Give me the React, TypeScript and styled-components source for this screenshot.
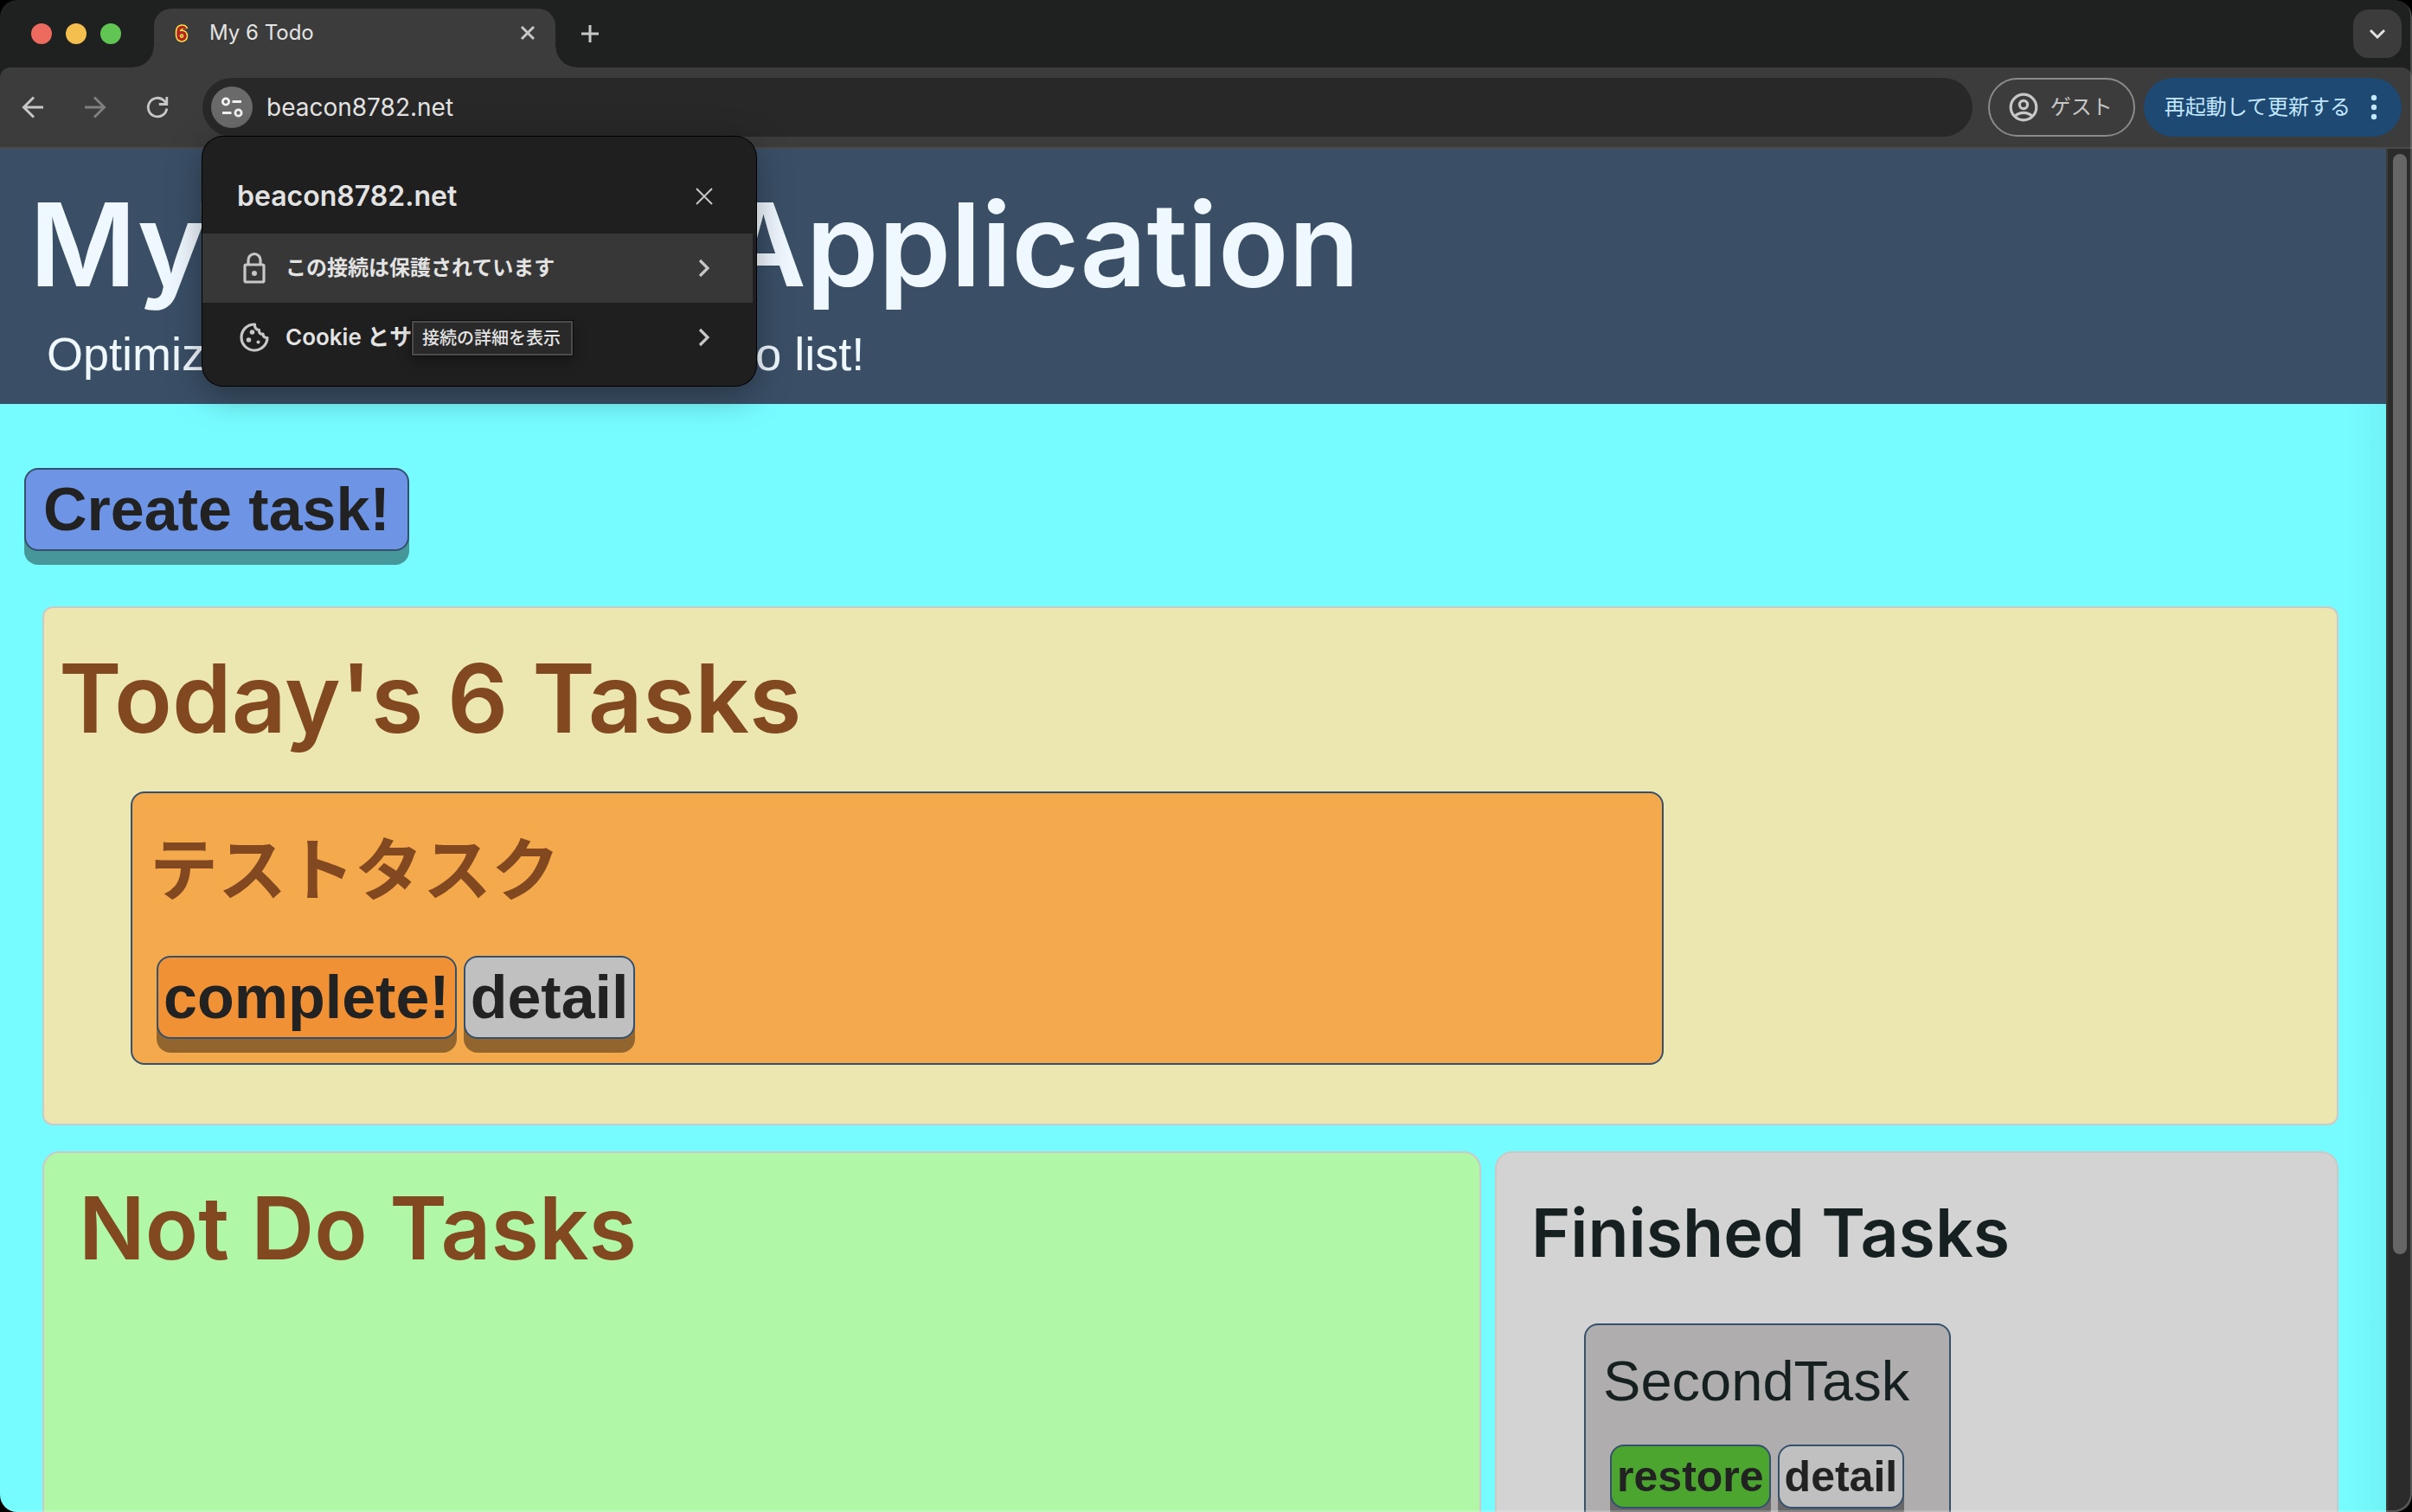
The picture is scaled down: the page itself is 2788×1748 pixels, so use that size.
import React from "react";
import styled, { createGlobalStyle, css } from "styled-components";

const GlobalStyle = createGlobalStyle`
  * { box-sizing: border-box; }
  html, body, #root { height: 100%; }
  body { margin: 0; background: #000; overflow: hidden; }
  h1, h2, h3, p { margin: 0; }
  button, input { font: inherit; color: inherit; margin: 0; }
`;

const uiFont = `Inter, "Noto Sans CJK JP", sans-serif`;
const pageFont = `"Liberation Sans", "Noto Sans CJK JP", sans-serif`;

/* ---------- browser window ---------- */

const Window = styled.div`
  position: relative;
  height: 100vh;
  display: flex;
  flex-direction: column;
  overflow: hidden;
  border-radius: 20px;
  background: #1f2120;
  font-family: ${uiFont};
  &::after {
    content: "";
    position: absolute;
    inset: 0;
    border-radius: 20px;
    box-shadow: inset -2px -2px 0 rgba(255, 255, 255, 0.2);
    pointer-events: none;
  }
`;

const TabStrip = styled.div`
  height: 78px;
  flex: none;
  display: flex;
  align-items: center;
  padding: 0 12px 0 36px;
`;

const Lights = styled.div`
  display: flex;
  gap: 16px;
  margin-right: 38px;
`;

const Light = styled.span<{ $color: string }>`
  width: 24px;
  height: 24px;
  border-radius: 50%;
  background: ${(p) => p.$color};
`;

const Tab = styled.div`
  position: relative;
  align-self: flex-end;
  width: 464px;
  height: 68px;
  padding: 0 20px 12px 24px;
  display: flex;
  align-items: center;
  border-radius: 20px 20px 0 0;
  background: #3c3c3c;
  color: #e3e3e3;
  font-size: 24px;
  line-height: 32px;
  &::before, &::after {
    content: "";
    position: absolute;
    bottom: 0;
    width: 24px;
    height: 24px;
  }
  &::before {
    right: 100%;
    background: radial-gradient(circle at 0 0, transparent 23px, #3c3c3c 24px);
  }
  &::after {
    left: 100%;
    background: radial-gradient(circle at 100% 0, transparent 23px, #3c3c3c 24px);
  }
`;

const TabTitle = styled.span`
  flex: 1;
  margin-left: 24px;
`;

const IconButton = styled.button<{ $size?: number; $dim?: boolean }>`
  flex: none;
  display: grid;
  place-items: center;
  width: ${(p) => p.$size ?? 24}px;
  height: ${(p) => p.$size ?? 24}px;
  padding: 0;
  border: 0;
  background: none;
  color: ${(p) => (p.$dim ? "#7f7f7f" : "#c7c7c7")};
`;

const TabSearch = styled(IconButton)`
  margin-left: auto;
  border-radius: 18px;
  background: #3c3c3c;
  color: #e3e3e3;
`;

const NewTab = styled(IconButton)`
  margin-left: 28px;
`;

const Toolbar = styled.div`
  height: 94px;
  flex: none;
  display: flex;
  align-items: center;
  padding: 0 12px 0 22px;
  border-bottom: 2px solid #4a4a4a;
  border-radius: 12px 12px 0 0;
  background: #3c3c3c;
  font-size: 24px;
`;

const NavButtons = styled.div`
  display: flex;
  gap: 40px;
  margin-right: 36px;
`;

const Omnibox = styled.div`
  flex: 1;
  height: 68px;
  display: flex;
  align-items: center;
  padding: 0 10px;
  border-radius: 34px;
  background: #282828;
`;

const SiteChip = styled(IconButton)`
  border-radius: 50%;
  background: #6a6a6a;
  color: #f0f0f0;
`;

const Address = styled.input`
  flex: 1;
  margin-left: 16px;
  padding: 0;
  border: 0;
  outline: 0;
  background: none;
  color: #e3e3e3;
  font-size: 28px;
  line-height: 36px;
`;

const Pill = styled.button<{ $filled?: boolean }>`
  height: 68px;
  display: flex;
  align-items: center;
  border-radius: 34px;
  line-height: 36px;
  white-space: nowrap;
  ${(p) =>
    p.$filled
      ? css`
          margin-left: 10px;
          padding: 0 28px 0 24px;
          gap: 23px;
          border: 0;
          background: #1e4972;
          color: #c2e7ff;
        `
      : css`
          margin-left: 18px;
          padding: 0 24px 0 22px;
          gap: 14px;
          border: 2px solid #8a8a8a;
          background: none;
          color: #c7c7c7;
        `}
`;

/* ---------- site information popup ---------- */

const Popup = styled.section`
  position: absolute;
  z-index: 2;
  left: 234px;
  top: 158px;
  width: 640px;
  padding: 30px 0 16px;
  border-radius: 24px;
  background: #1f1f1f;
  color: #e3e3e3;
  box-shadow: 0 0 0 1px #000, 0 10px 40px rgba(0, 0, 0, 0.35);
`;

const PopupHeader = styled.div`
  display: flex;
  align-items: center;
  justify-content: space-between;
  height: 82px;
  padding: 0 48px 4px 40px;
`;

const PopupTitle = styled.h2`
  font-size: 32px;
  font-weight: 600;
  line-height: 40px;
`;

const PopupRow = styled.button<{ $hover?: boolean }>`
  display: flex;
  align-items: center;
  width: 636px;
  height: 80px;
  padding: 0 44px 0 40px;
  border: 0;
  background: ${(p) => (p.$hover ? "#373737" : "none")};
  text-align: left;
  font-size: ${(p) => (p.$hover ? 24 : 26)}px;
  font-weight: 600;
  line-height: 36px;
`;

const RowLabel = styled.span`
  flex: 1;
  margin-left: 16px;
`;

const Tooltip = styled.div`
  position: absolute;
  left: 242px;
  top: 213px;
  padding: 4px 12px 4px 10px;
  border: 2px solid #4c4c4c;
  background: #292929;
  box-shadow: 0 0 0 1px #0c0c0c, 0 8px 16px rgba(0, 0, 0, 0.3);
  font-size: 20px;
  font-weight: 500;
  line-height: 28px;
`;

/* ---------- todo page ---------- */

const Viewport = styled.div`
  flex: 1;
  min-height: 0;
  display: flex;
`;

const Page = styled.div`
  flex: 1;
  overflow: hidden;
  background: linear-gradient(to right, transparent calc(100% - 48px), rgba(0, 60, 60, 0.05)), #76fcff;
  font-family: ${pageFont};
  color: #82481f;
`;

const Scrollbar = styled.div`
  width: 30px;
  padding: 6px 6px 0;
  border-left: 2px solid #3c3c3c;
  background: #2b2b2b;
`;

const Thumb = styled.div`
  width: 16px;
  height: 81%;
  border-radius: 8px;
  background: #666;
`;

const Header = styled.header`
  padding: 30px 34px 18px;
  background: #3a4f66;
  color: #f0f8ff;
  white-space: nowrap;
`;

const headingFont = css`
  font-family: ${uiFont};
  font-weight: 600;
`;

const SiteTitle = styled.h1`
  ${headingFont}
  font-size: 134px;
  line-height: 160px;
`;

const Accent = styled.span`
  margin: 0 16px 0 -10px;
  color: #ffff3c;
`;

const Tagline = styled.p`
  margin: 7px 0 0 20px;
  font-size: 54px;
  line-height: 80px;
`;

const Main = styled.main`
  padding: 74px 55px 0 28px;
`;

const TaskButton = styled.button<{ $color: string; $small?: boolean; $wide?: boolean }>`
  padding: 6px ${(p) => (p.$wide ? 20 : 6)}px;
  border: 2px solid #34506c;
  border-radius: 16px;
  background: ${(p) => p.$color};
  box-shadow: 0 16px 0 rgba(0, 0, 0, 0.4);
  color: #222;
  font-size: ${(p) => (p.$small ? 50 : 70)}px;
  font-weight: 700;
  line-height: ${(p) => (p.$small ? 58 : 80)}px;
`;

const Board = styled.div`
  display: grid;
  grid-template-columns: 29fr 17fr;
  gap: 30px 16px;
  margin: 64px 0 0 21px;
`;

const Panel = styled.section<{ $bg: string }>`
  padding: 28px 40px 80px;
  border: 2px solid #ccc8c8;
  border-radius: 20px;
  background: ${(p) => p.$bg};
`;

const TodayPanel = styled(Panel)`
  grid-column: 1 / -1;
  padding: 40px 0 68px 17px;
  border-radius: 12px;
`;

const TodayTitle = styled.h2`
  ${headingFont}
  font-size: 110px;
  line-height: 128px;
`;

const PanelTitle = styled.h2`
  ${headingFont}
  font-size: 101px;
  line-height: 116px;
`;

const FinishedTitle = styled.h2`
  ${headingFont}
  padding-top: 19px;
  color: #162020;
  font-size: 77px;
  line-height: 90px;
`;

const TaskCard = styled.article`
  width: 67.3%;
  margin: 44px 0 0 83px;
  padding: 43px 20px 28px;
  border: 2px solid #34506c;
  border-radius: 16px;
  background: #f4a94d;
`;

const FinishedCard = styled(TaskCard)`
  width: fit-content;
  margin: 60px 0 0 61px;
  padding: 27px 46px 28px 20px;
  background: #b0adae;
  color: #162020;
`;

const TaskName = styled.h3`
  font-size: 79px;
  line-height: 96px;
`;

const FinishedName = styled.p`
  font-size: 65px;
  line-height: 76px;
`;

const Actions = styled.div<{ $small?: boolean }>`
  display: flex;
  gap: 8px;
  margin: ${(p) => (p.$small ? 35 : 49)}px 0 0 8px;
`;

/* ---------- icons ---------- */

type StrokeProps = { d: string; size: number; width?: number };

const Stroke = ({ d, size, width = 3 }: StrokeProps) => (
  <svg width={size} height={size} viewBox={`0 0 ${size} ${size}`} fill="none" stroke="currentColor" strokeWidth={width} aria-hidden>
    <path d={d} />
  </svg>
);

const Favicon = () => (
  <svg width="16" height="22" viewBox="0 0 16 22" fill="none" aria-hidden>
    <path d="M12 6.500C11.500 3.500 4 3 4 10v4c0 6 8 6 8 0.500c0-5-7-5-8-1" stroke="#f6e048" strokeWidth="6.500" />
    <path d="M12 6.500C11.500 3.500 4 3 4 10v4c0 6 8 6 8 0.500c0-5-7-5-8-1" stroke="#b3261e" strokeWidth="3.400" />
  </svg>
);

const ReloadIcon = () => (
  <svg width="28" height="28" viewBox="0 0 28 28" fill="none" stroke="currentColor" strokeWidth="2.800" aria-hidden>
    <path d="M24.800 15.500A10.800 10.800 0 1 1 21.500 6.200L24.500 9.500" />
    <path d="M24.800 2v8.500h-9" />
  </svg>
);

const TuneIcon = () => (
  <svg width="28" height="28" viewBox="0 0 28 28" fill="none" stroke="currentColor" strokeWidth="2.800" aria-hidden>
    <circle cx="7" cy="7.500" r="3.600" />
    <path d="M14.500 7.500H25M3 20.500h10.500" />
    <circle cx="21.500" cy="20.500" r="3.600" />
  </svg>
);

const GuestIcon = () => (
  <svg width="34" height="34" viewBox="0 0 34 34" fill="none" stroke="currentColor" strokeWidth="3.200" aria-hidden>
    <circle cx="17" cy="17" r="14.800" />
    <circle cx="17" cy="14" r="4.600" />
    <path d="M7 27.500c5-5.500 15-5.500 20 0" />
  </svg>
);

const DotsIcon = () => (
  <svg width="8" height="30" viewBox="0 0 8 30" fill="currentColor" aria-hidden>
    <circle cx="4" cy="4" r="3.200" />
    <circle cx="4" cy="15" r="3.200" />
    <circle cx="4" cy="26" r="3.200" />
  </svg>
);

const LockIcon = () => (
  <svg width="40" height="40" viewBox="0 0 40 40" fill="none" stroke="#c7c7c7" strokeWidth="3.200" aria-hidden>
    <rect x="9" y="16" width="22" height="20" rx="1.500" />
    <path d="M13 16v-5.500a7 7 0 0 1 14 0V16" />
    <circle cx="20" cy="26" r="3" fill="#c7c7c7" stroke="none" />
  </svg>
);

const CookieIcon = () => (
  <svg width="40" height="40" viewBox="0 0 40 40" fill="none" stroke="#c7c7c7" strokeWidth="3.200" strokeLinejoin="round" aria-hidden>
    <path d="M20.500 5A15 15 0 1 0 35 20.500c-3 0-5-1.500-5-4.500c-3.500 0.500-5-1.500-4.500-4.500c-3.500 0-5.500-3-5-6.500z" />
    <g fill="#c7c7c7" stroke="none">
      <circle cx="17.500" cy="14" r="2.800" />
      <circle cx="13.500" cy="23" r="2.800" />
      <circle cx="24.500" cy="25.500" r="2" />
    </g>
  </svg>
);

const ChevronRight = () => (
  <svg width="24" height="24" viewBox="0 0 24 24" fill="none" stroke="#c7c7c7" strokeWidth="3.200" aria-hidden>
    <path d="M7 3l9 9-9 9" />
  </svg>
);

/* ---------- app ---------- */

const SiteInfo = () => (
  <Popup aria-label="beacon8782.net">
    <PopupHeader>
      <PopupTitle>beacon8782.net</PopupTitle>
      <IconButton>
        <Stroke size={24} width={2} d="M3 3l18 18M21 3L3 21" />
      </IconButton>
    </PopupHeader>
    <PopupRow $hover>
      <LockIcon />
      <RowLabel>この接続は保護されています</RowLabel>
      <ChevronRight />
    </PopupRow>
    <PopupRow>
      <CookieIcon />
      <RowLabel>Cookie とサイトデータ</RowLabel>
      <ChevronRight />
    </PopupRow>
    <Tooltip role="tooltip">接続の詳細を表示</Tooltip>
  </Popup>
);

export default function App() {
  return (
    <>
      <GlobalStyle />
      <Window>
        <TabStrip>
          <Lights>
            <Light $color="#ed6a5e" />
            <Light $color="#f4bf4f" />
            <Light $color="#61c554" />
          </Lights>
          <Tab>
            <Favicon />
            <TabTitle>My 6 Todo</TabTitle>
            <IconButton>
              <Stroke size={24} d="M5 5l14 14M19 5L5 19" />
            </IconButton>
          </Tab>
          <NewTab>
            <Stroke size={24} d="M12 2v20M2 12h20" />
          </NewTab>
          <TabSearch $size={56}>
            <Stroke size={24} width={3} d="M4 8l8 8 8-8" />
          </TabSearch>
        </TabStrip>
        <Toolbar>
          <NavButtons>
            <IconButton $size={32}>
              <Stroke size={32} d="M28 16H6M17 4.500L5.500 16 17 27.500" />
            </IconButton>
            <IconButton $size={32} $dim>
              <Stroke size={32} d="M4 16h22M15 4.500L26.500 16 15 27.500" />
            </IconButton>
            <IconButton $size={32}>
              <ReloadIcon />
            </IconButton>
          </NavButtons>
          <Omnibox>
            <SiteChip $size={48}>
              <TuneIcon />
            </SiteChip>
            <Address aria-label="URL" defaultValue="beacon8782.net" />
          </Omnibox>
          <Pill>
            <GuestIcon />
            ゲスト
          </Pill>
          <Pill $filled>
            再起動して更新する
            <DotsIcon />
          </Pill>
        </Toolbar>
        <Viewport>
          <Page>
            <Header>
              <SiteTitle>
                My<Accent>Todo Six</Accent> Application
              </SiteTitle>
              <Tagline>Optimize your daily task with 6 todo list!</Tagline>
            </Header>
            <Main>
              <TaskButton $color="#6e94e5" $wide>
                Create task!
              </TaskButton>
              <Board>
                <TodayPanel $bg="#ece7b0">
                  <TodayTitle>Today's 6 Tasks</TodayTitle>
                  <TaskCard>
                    <TaskName>テストタスク</TaskName>
                    <Actions>
                      <TaskButton $color="#f19135">complete!</TaskButton>
                      <TaskButton $color="#c0c0c0">detail</TaskButton>
                    </Actions>
                  </TaskCard>
                </TodayPanel>
                <Panel $bg="#b0f8a8">
                  <PanelTitle>Not Do Tasks</PanelTitle>
                </Panel>
                <Panel $bg="#d3d3d3">
                  <FinishedTitle>Finished Tasks</FinishedTitle>
                  <FinishedCard>
                    <FinishedName>SecondTask</FinishedName>
                    <Actions $small>
                      <TaskButton $small $color="#4ba52f">restore</TaskButton>
                      <TaskButton $small $color="#c0c0c0">detail</TaskButton>
                    </Actions>
                  </FinishedCard>
                </Panel>
              </Board>
            </Main>
          </Page>
          <Scrollbar>
            <Thumb />
          </Scrollbar>
        </Viewport>
        <SiteInfo />
      </Window>
    </>
  );
}
